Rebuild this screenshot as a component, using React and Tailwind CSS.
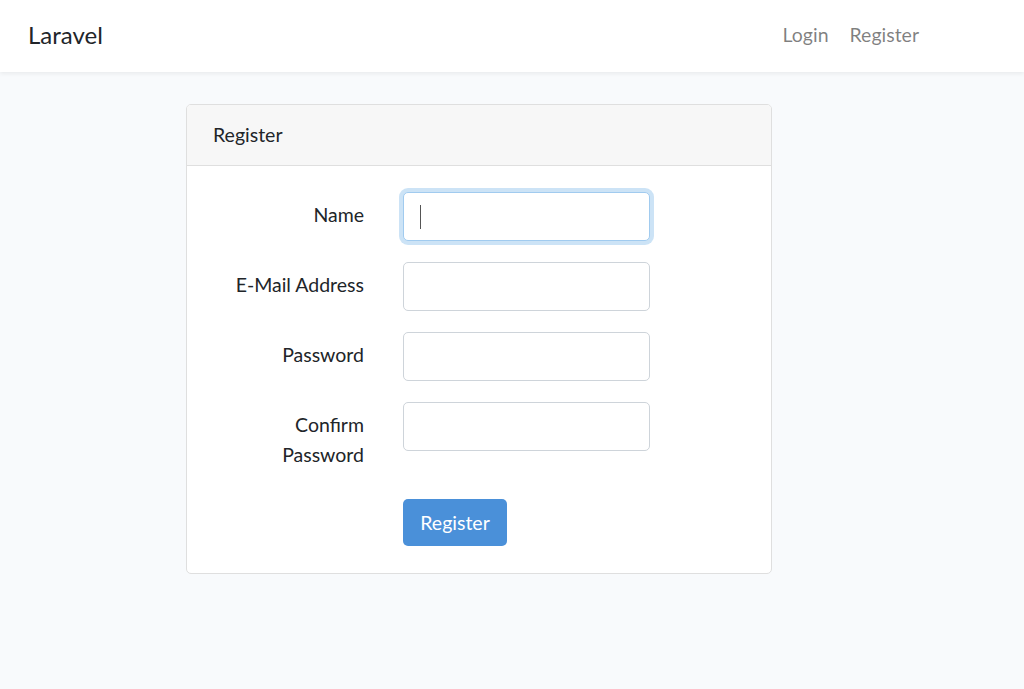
export default function App() {
    const fields = [
        { label: "Name", type: "text", focused: true },
        { label: "E-Mail Address", type: "email" },
        { label: "Password", type: "password" },
        { label: "Confirm Password", type: "password" },
    ];

    return (
        <div className="min-h-[689px] bg-[#f8fafc] text-[#212529] font-['Lato',sans-serif] text-[19.5px] leading-[30px]">
            {/* Navbar */}
            <nav className="h-[72px] bg-white shadow-[0_2px_4px_rgba(0,0,0,0.06)] flex items-center justify-between pl-[28px] pr-[105px]">
                <span className="text-[24px] leading-none text-[#212529] -mt-[2px]">Laravel</span>
                <div className="flex items-center gap-[21px] text-[rgba(0,0,0,0.5)] -mt-[2px]">
                    <span>Login</span>
                    <span>Register</span>
                </div>
            </nav>

            {/* Main */}
            <main className="pt-[32px] pl-[186px]">
                <div className="w-[586px] bg-white border border-[#dfdfdf] rounded-[5px] overflow-hidden">
                    <div className="h-[61px] bg-[#f7f7f7] border-b border-[#dfdfdf] px-[26px] flex items-center">
                        Register
                    </div>
                    <div className="pt-[26px] pb-[27px] px-[26px]">
                        {fields.map((f) => (
                            <div key={f.label} className="flex mb-[21px]">
                                <label className="w-[151px] text-right py-[8px]">{f.label}</label>
                                <div className="ml-[39px] relative">
                                    <input
                                        type={f.type}
                                        className={`w-[247px] h-[49px] rounded-[5px] bg-white outline-none ${
                                            f.focused
                                                ? "border border-[#a1cbef] shadow-[0_0_0_4px_rgba(52,144,220,0.25)]"
                                                : "border border-[#ced4da]"
                                        }`}
                                    />
                                    {f.focused && (
                                        <span className="absolute left-[17px] top-[13px] w-[1px] h-[24px] bg-[#555]" />
                                    )}
                                </div>
                            </div>
                        ))}
                        <div className="flex">
                            <div className="w-[151px]" />
                            <button className="ml-[39px] w-[104px] h-[47px] rounded-[5px] bg-[#4a90d9] text-white">
                                Register
                            </button>
                        </div>
                    </div>
                </div>
            </main>
        </div>
    );
}
